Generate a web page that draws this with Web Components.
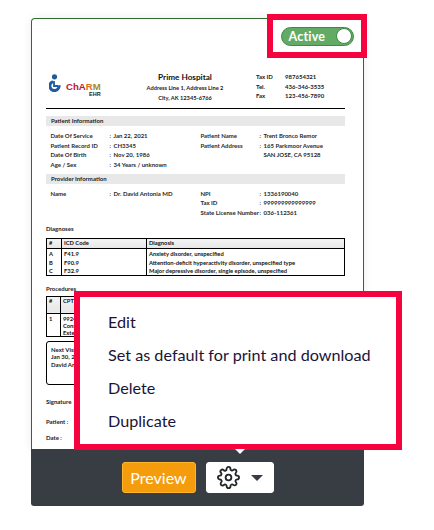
<!DOCTYPE html>
<html>
<head>
<meta charset="utf-8">
<title>Template preview</title>
<style>
  html, body { margin: 0; padding: 0; background: #fff; }
  body { font-family: Lato, "Open Sans", sans-serif; }
</style>
</head>
<body>
<template-stage></template-stage>
<script>
class Base extends HTMLElement {
    constructor() {
        super();
        this.attachShadow({ mode: 'open' });
    }
}

class StatusToggle extends Base {
    connectedCallback() {
        this.shadowRoot.innerHTML = `
      <style>
        :host {
          position: absolute; left: 267px; top: 14px;
          width: 100px; height: 44px; box-sizing: border-box;
          border: 6px solid #f5033f; background: #fff;
          display: flex; align-items: center; justify-content: center;
        }
        .pill {
          width: 73px; height: 19px; box-sizing: border-box;
          background: #62ab65; border: 1px solid #3f8a45; border-radius: 10px;
          display: flex; align-items: center; justify-content: space-between;
          padding: 0 1px 0 7px; color: #fff;
          font: 700 12.5px Lato, sans-serif; letter-spacing: .2px;
        }
        i { width: 16px; height: 16px; box-sizing: border-box; border-radius: 50%; background: #fff; border: 1px solid #3f8a45; }
      </style>
      <div class="pill"><span>Active</span><i></i></div>`;
    }
}

class DocHeader extends Base {
    connectedCallback() {
        this.shadowRoot.innerHTML = `
      <style>
        :host {
          display: grid; grid-template-columns: 85px 108px 46px 1fr;
          height: 36px; border-bottom: 1px solid #000;
          font: 700 5.7px/9.5px Lato, sans-serif; color: #222;
        }
        .logo { display: flex; gap: 3px; padding: 2px 0 0 3px; }
        .brand { font: 700 9.6px/10px "Liberation Sans", sans-serif; padding-top: 8px; text-align: right; }
        .brand b { color: #c4122f; }
        .brand b.o { color: #d8701c; }
        .brand b.y { color: #a58a1c; }
        .brand small { display: block; font-size: 5.5px; line-height: 5px; color: #222; }
        .hosp { text-align: center; }
        .hosp h1 { margin: 0; font: 700 8.2px/11px Lato, sans-serif; color: #111; }
        .tax { padding-left: 17px; font-size: 6px; }
        .vals { font-size: 6px; }
        .logo svg { flex: none; }
      </style>
      <div class="logo">
        <svg width="14" height="20" viewBox="0 0 14 20">
          <circle cx="5.5" cy="2.8" r="2.6" fill="#1f5c9e"/>
          <path d="M4 7.6a4.6 4.6 0 1 0 6 3.6" fill="none" stroke="#1f5c9e" stroke-width="3"/>
          <path d="M5 7v5h4" fill="none" stroke="#1f5c9e" stroke-width="1.8"/>
        </svg>
        <div class="brand"><b>Ch</b><b>A</b><b class="o">R</b><b class="y">M</b><small>EHR</small></div>
      </div>
      <div class="hosp">
        <h1>Prime Hospital</h1>
        <div>Address Line 1, Address Line 2</div>
        <div>City, AK 12345-6766</div>
      </div>
      <div class="tax"><div>Tax ID</div><div>Tel.</div><div>Fax</div></div>
      <div class="vals"><div>987654321</div><div>436-346-3535</div><div>123-456-7890</div></div>`;
    }
}

class SectionBar extends Base {
    connectedCallback() {
        this.shadowRoot.innerHTML = `
      <style>
        :host {
          display: block; height: 10px; background: #e8e8e8; padding-left: 5px;
          font: 700 6px/10px Lato, sans-serif; color: #222;
        }
      </style>
      <slot></slot>`;
    }
}

class InfoGrid extends Base {
    connectedCallback() {
        const rows = JSON.parse(this.getAttribute('rows'));
        this.shadowRoot.innerHTML = `
      <style>
        :host {
          display: grid; grid-template-columns: 59px 4px 87px 59px 4px 1fr;
          grid-auto-rows: 9.67px; padding: 5px 0 4px 4.5px;
          font: 700 6px/9.67px Lato, sans-serif; color: #2a2a2a;
        }
      </style>
      ${rows.flat().map(c => `<span>${c}</span>`).join('')}`;
    }
}

class DataTable extends Base {
    connectedCallback() {
        const cols = JSON.parse(this.getAttribute('cols'));
        const rows = JSON.parse(this.getAttribute('rows'));
        const widths = JSON.parse(this.getAttribute('widths'));
        const head = this.getAttribute('head') || 9;
        this.shadowRoot.innerHTML = `
      <style>
        :host { display: block; font: 700 5.8px/8.4px Lato, sans-serif; color: #111; }
        table { width: 100%; border-collapse: collapse; table-layout: fixed; border: 1px solid #000; }
        th, td { border-left: 1px solid #000; padding: 0 2px; text-align: left; vertical-align: top; white-space: nowrap; overflow: hidden; }
        th { height: ${head}px; border-bottom: 1px solid #000; background: linear-gradient(#f4f4f4, #e6e6e6); }
        th:first-child, td:first-child { border-left: 0; }
        td { line-height: ${this.getAttribute('lh') || 8.4}px; }
        tbody tr:first-child td { padding-top: 1px; }
      </style>
      <table>
        <colgroup>${widths.map(w => `<col style="width:${w}px">`).join('')}</colgroup>
        <thead><tr>${cols.map(c => `<th>${c}</th>`).join('')}</tr></thead>
        <tbody>${rows.map(r => `<tr>${r.map(c => `<td>${c}</td>`).join('')}</tr>`).join('')}</tbody>
      </table>`;
    }
}

class DocCard extends Base {
    connectedCallback() {
        this.shadowRoot.innerHTML = `
      <style>
        :host {
          display: block; box-sizing: border-box; width: 333px; height: 431px;
          border: 1px solid #2f6b2f; border-bottom: 0; border-radius: 4px 4px 0 0;
          padding: 53px 18px 0 14px; background: #fff;
          box-shadow: 0 0 10px rgba(0,0,0,.08);
          font: 700 6px/9px Lato, sans-serif; color: #222;
        }
        doc-header { margin-bottom: 7px; }
        .label { margin: 0; }
        .diag { margin: 2.5px 0 5px; }
        .proc { margin: 7.5px 0 3px; }
        .visit {
          margin-top: 4px; width: 120px; height: 44px; box-sizing: border-box;
          border: 1px solid #000; border-radius: 3px; padding: 4px 4px; line-height: 7.5px;
        }
        .sign { margin-top: 12px; }
        .pat { margin-top: 11px; }
        .date { margin-top: 7px; }
      </style>
      <doc-header></doc-header>
      <section-bar>Patient Information</section-bar>
      <info-grid rows='[
        ["Date Of Service",":","Jan 22, 2021","Patient Name",":","Trent Bronco Remor"],
        ["Patient Record ID",":","CH3345","Patient Address",":","165 Parkmoor Avenue"],
        ["Date Of Birth",":","Nov 20, 1986","","","SAN JOSE, CA 95128"],
        ["Age / Sex",":","34 Years / unknown","","",""]]'></info-grid>
      <section-bar>Provider Information</section-bar>
      <info-grid rows='[
        ["Name",":","Dr. David Antonia MD","NPI",":","1336190040"],
        ["","","","Tax ID",":","999999999999999"],
        ["","","","State License Number",":","036-112361"]]'></info-grid>
      <p class="label diag">Diagnoses</p>
      <data-table widths='[15,85,198]' cols='["#","ICD Code","Diagnosis"]' rows='[
        ["A","F41.9","Anxiety disorder, unspecified"],
        ["B","F90.9","Attention-deficit hyperactivity disorder, unspecified type"],
        ["C","F32.9","Major depressive disorder, single episode, unspecified"]]'></data-table>
      <p class="label proc">Procedures</p>
      <data-table head="16" lh="7" widths='[14,284]' cols='["#","CPT Code"]' rows='[["1","99241<br>Consultation<br>Extended"]]'></data-table>
      <div class="visit">Next Visit<br>Jan 30, 2021<br>David Antonia</div>
      <p class="label sign">Signature</p>
      <p class="label pat">Patient :</p>
      <p class="label date">Date :</p>`;
    }
}

class ActionMenu extends Base {
    connectedCallback() {
        const items = ['Edit', 'Set as default for print and download', 'Delete', 'Duplicate'];
        this.shadowRoot.innerHTML = `
      <style>
        :host {
          position: absolute; left: 74px; top: 291px; z-index: 2;
          width: 328px; height: 159px; box-sizing: border-box;
          border: 6px solid #f5033f; background: #fff;
          display: flex; flex-direction: column; justify-content: center;
          padding-left: 28px;
          font: 400 16.2px/33px Lato, sans-serif; color: #1a1438;
        }
      </style>
      ${items.map(t => `<div>${t}</div>`).join('')}`;
    }
}

class ActionBar extends Base {
    connectedCallback() {
        this.shadowRoot.innerHTML = `
      <style>
        :host {
          display: flex; justify-content: center; gap: 10px; box-sizing: border-box;
          width: 333px; height: 57px; padding: 13px 0 0 0; position: relative;
          background: #383c43; border-radius: 0 0 3px 3px;
        }
        .tip {
          position: absolute; left: 204px; top: 0; z-index: 3; width: 0; height: 0;
          border: 5.5px solid transparent; border-top: 5px solid #fff; border-bottom: 0;
        }
        button {
          height: 31px; box-sizing: border-box; border-radius: 3px; padding: 0;
          display: flex; align-items: center; justify-content: center;
        }
        .preview {
          width: 74px; background: #f59c0c; border: 1px solid #ffb52e; color: #fff;
          font: 400 16px Lato, sans-serif;
        }
        .gear { width: 68px; background: #fff; border: 1px solid #fff; gap: 11px; }
        .caret { width: 0; height: 0; border: 6px solid transparent; border-top: 6px solid #383c43; border-bottom: 0; }
      </style>
      <span class="tip"></span>
      <button class="preview">Preview</button>
      <button class="gear" aria-label="Settings">
        <svg width="23" height="23" viewBox="0 0 24 24" fill="none" stroke="#22252a" stroke-width="1.9" stroke-linecap="round" stroke-linejoin="round">
          <circle cx="12" cy="12" r="3"/>
          <path d="M19.4 15a1.65 1.65 0 0 0 .33 1.82l.06.06a2 2 0 1 1-2.83 2.83l-.06-.06a1.65 1.65 0 0 0-2.82 1.17V21a2 2 0 0 1-4 0v-.09a1.65 1.65 0 0 0-2.82-1.15l-.06.06a2 2 0 1 1-2.83-2.83l.06-.06a1.65 1.65 0 0 0-1.17-2.82H3a2 2 0 0 1 0-4h.09a1.65 1.65 0 0 0 1.15-2.82l-.06-.06a2 2 0 1 1 2.83-2.83l.06.06a1.65 1.65 0 0 0 1.82.33H9a1.65 1.65 0 0 0 1-1.51V3a2 2 0 0 1 4 0v.09a1.65 1.65 0 0 0 2.82 1.15l.06-.06a2 2 0 1 1 2.83 2.83l-.06.06a1.65 1.65 0 0 0-.33 1.82V9a1.65 1.65 0 0 0 1.51 1H21a2 2 0 0 1 0 4h-.09a1.65 1.65 0 0 0-1.51 1z"/>
        </svg>
        <span class="caret"></span>
      </button>`;
    }
}

class TemplateStage extends Base {
    connectedCallback() {
        this.shadowRoot.innerHTML = `
      <style>
        :host { display: block; position: relative; width: 434px; height: 530px; padding: 18px 0 0 31px; box-sizing: border-box; overflow: hidden; }
      </style>
      <doc-card></doc-card>
      <action-bar></action-bar>
      <status-toggle></status-toggle>
      <action-menu></action-menu>`;
    }
}

customElements.define('status-toggle', StatusToggle);
customElements.define('doc-header', DocHeader);
customElements.define('section-bar', SectionBar);
customElements.define('info-grid', InfoGrid);
customElements.define('data-table', DataTable);
customElements.define('doc-card', DocCard);
customElements.define('action-menu', ActionMenu);
customElements.define('action-bar', ActionBar);
customElements.define('template-stage', TemplateStage);
</script>
</body>
</html>
